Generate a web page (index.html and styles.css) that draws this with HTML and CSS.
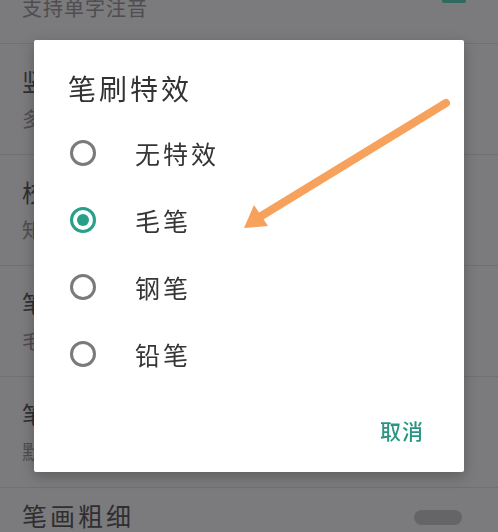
FILE: index.html
```html
<!DOCTYPE html>
<html lang="zh-CN">
<head>
    <meta charset="UTF-8">
    <meta name="viewport" content="width=device-width, initial-scale=1.0">
    <title>笔刷特效</title>
    <link rel="stylesheet" href="styles.css">
</head>
<body>

    <div class="settings">
        <div class="row">
            <div class="row-text">
                <div class="row-title">单字注音</div>
                <div class="row-sub">支持单字注音</div>
            </div>
            <div class="checkbox"></div>
        </div>
        <div class="row">
            <div class="row-text">
                <div class="row-title">竖排显示</div>
                <div class="row-sub">多字竖向排列</div>
            </div>
        </div>
        <div class="row">
            <div class="row-text">
                <div class="row-title">校对模式</div>
                <div class="row-sub">知识点校对</div>
            </div>
        </div>
        <div class="row">
            <div class="row-text">
                <div class="row-title">笔刷特效</div>
                <div class="row-sub">毛笔</div>
            </div>
        </div>
        <div class="row">
            <div class="row-text">
                <div class="row-title">笔画颜色</div>
                <div class="row-sub">默认黑色</div>
            </div>
        </div>
        <div class="row row-single">
            <div class="row-title row-title-big">笔画粗细</div>
            <div class="slider-track"></div>
        </div>
    </div>

    <div class="overlay">
        <div class="dialog">
            <div class="dialog-title">笔刷特效</div>
            <div class="options">
                <label class="option">
                    <span class="radio"></span>
                    <span class="option-label">无特效</span>
                </label>
                <label class="option">
                    <span class="radio checked"></span>
                    <span class="option-label">毛笔</span>
                </label>
                <label class="option">
                    <span class="radio"></span>
                    <span class="option-label">钢笔</span>
                </label>
                <label class="option">
                    <span class="radio"></span>
                    <span class="option-label">铅笔</span>
                </label>
            </div>
            <div class="dialog-footer">
                <button class="text-button">取消</button>
            </div>
        </div>
    </div>

    <svg class="arrow" viewBox="0 0 498 532" width="498" height="532">
        <line x1="446" y1="103" x2="258" y2="218" stroke="#f6a15c" stroke-width="8" stroke-linecap="round"/>
        <polygon points="244,228 268,226 254,205" fill="#f6a15c"/>
    </svg>

</body>
</html>
```

FILE: styles.css
```css
body {
    font-family: "Noto Sans CJK SC", "Noto Sans", sans-serif;
    margin: 0;
    padding: 0;
    background-color: #7b7a7c;
    width: 498px;
    height: 532px;
    overflow: hidden;
}
.settings {
    margin-top: -67px;
}
.row {
    display: flex;
    align-items: center;
    justify-content: space-between;
    height: 111px;
    box-sizing: border-box;
    padding: 0 32px 0 22px;
    border-bottom: 1px solid #706f71;
}
.row-text {
    display: flex;
    flex-direction: column;
    gap: 12px;
}
.row-title {
    font-size: 24px;
    line-height: 28px;
    letter-spacing: 3px;
    color: #2f2e30;
}
.row-sub {
    font-size: 20px;
    line-height: 24px;
    letter-spacing: 1px;
    color: #4e4d4f;
}
.checkbox {
    width: 24px;
    height: 24px;
    border-radius: 2px;
    background-color: #2e6a5d;
    margin-top: 6px;
}
.row-single {
    align-items: flex-start;
    padding-top: 12px;
    border-bottom: none;
}
.row-title-big {
    font-size: 25px;
    line-height: 30px;
}
.slider-track {
    width: 48px;
    height: 15px;
    border-radius: 8px;
    background-color: #656466;
    margin-top: 10px;
    margin-right: 4px;
}
.overlay {
    position: fixed;
    inset: 0;
    display: flex;
    justify-content: center;
    align-items: flex-start;
    padding-top: 40px;
}
.dialog {
    width: 430px;
    height: 432px;
    box-sizing: border-box;
    background-color: #ffffff;
    border-radius: 2px;
    box-shadow: 0 4px 14px rgba(0, 0, 0, 0.25);
    padding: 31px 40px 28px 34px;
    display: flex;
    flex-direction: column;
}
.dialog-title {
    font-size: 28px;
    line-height: 34px;
    letter-spacing: 3px;
    color: #333333;
}
.options {
    margin-top: 14px;
    padding-left: 2px;
}
.option {
    display: flex;
    align-items: center;
    height: 67px;
}
.radio {
    width: 26px;
    height: 26px;
    box-sizing: border-box;
    border: 3px solid #7a7a7a;
    border-radius: 50%;
    display: flex;
    align-items: center;
    justify-content: center;
}
.radio.checked {
    border-color: #26a08a;
}
.radio.checked::after {
    content: "";
    width: 12px;
    height: 12px;
    border-radius: 50%;
    background-color: #26a08a;
}
.option-label {
    margin-left: 39px;
    font-size: 25px;
    line-height: 30px;
    letter-spacing: 3px;
    color: #363636;
}
.dialog-footer {
    margin-top: auto;
    display: flex;
    justify-content: flex-end;
}
.text-button {
    font-family: inherit;
    font-size: 21px;
    line-height: 28px;
    letter-spacing: 1px;
    font-weight: 500;
    color: #2a9682;
    background: none;
    border: none;
    padding: 0;
}
.arrow {
    position: fixed;
    left: 0;
    top: 0;
    pointer-events: none;
}
```
